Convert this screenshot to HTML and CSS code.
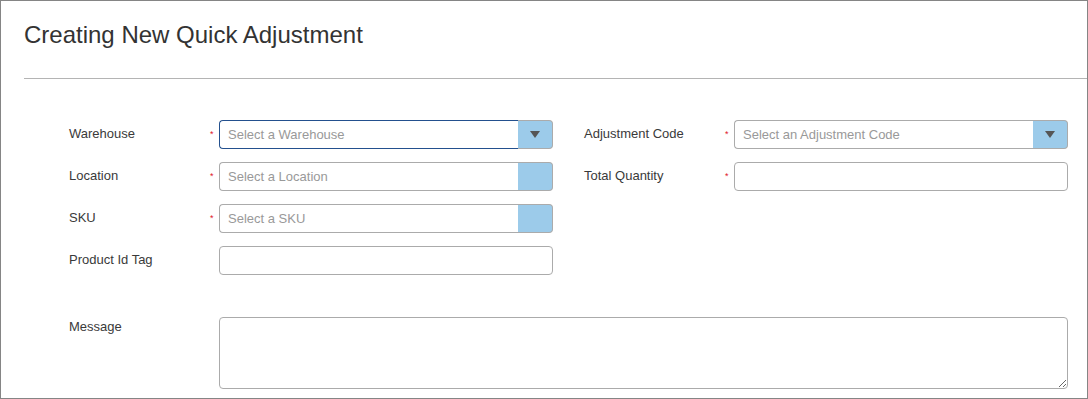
FILE: index.html
```html
<!DOCTYPE html>
<html lang="en">
<head>
    <meta charset="UTF-8">
    <title>Creating New Quick Adjustment</title>
    <link rel="stylesheet" href="styles.css">
</head>
<body>
    <div class="panel">
        <div class="panel-header">
            <h1>Creating New Quick Adjustment</h1>
        </div>
        <form class="adjust-form">
            <div class="columns">
                <div class="column">
                    <div class="field">
                        <label>Warehouse</label>
                        <span class="req">*</span>
                        <div class="select focused">
                            <input type="text" placeholder="Select a Warehouse">
                            <span class="select-btn"><span class="caret"></span></span>
                        </div>
                    </div>
                    <div class="field">
                        <label>Location</label>
                        <span class="req">*</span>
                        <div class="select">
                            <input type="text" placeholder="Select a Location">
                            <span class="select-btn"></span>
                        </div>
                    </div>
                    <div class="field">
                        <label>SKU</label>
                        <span class="req">*</span>
                        <div class="select">
                            <input type="text" placeholder="Select a SKU">
                            <span class="select-btn"></span>
                        </div>
                    </div>
                    <div class="field">
                        <label>Product Id Tag</label>
                        <span class="req"></span>
                        <input class="text-input" type="text">
                    </div>
                </div>
                <div class="column">
                    <div class="field">
                        <label>Adjustment Code</label>
                        <span class="req">*</span>
                        <div class="select">
                            <input type="text" placeholder="Select an Adjustment Code">
                            <span class="select-btn"><span class="caret"></span></span>
                        </div>
                    </div>
                    <div class="field">
                        <label>Total Quantity</label>
                        <span class="req">*</span>
                        <input class="text-input" type="text">
                    </div>
                </div>
            </div>
            <div class="field message-field">
                <label>Message</label>
                <span class="req"></span>
                <textarea></textarea>
            </div>
        </form>
    </div>
</body>
</html>
```

FILE: styles.css
```css
* {
    box-sizing: border-box;
}
body {
    margin: 0;
    font-family: 'Liberation Sans', Arial, sans-serif;
    color: #333;
    background-color: #fff;
}
.panel {
    width: 1088px;
    height: 399px;
    border: 1px solid #858585;
    overflow: hidden;
}
.panel-header {
    margin-left: 23px;
    height: 78px;
    border-bottom: 1px solid #b4b4b4;
}
h1 {
    margin: 0;
    padding-top: 20px;
    font-size: 24px;
    font-weight: normal;
    color: #333;
    line-height: 28px;
}
.adjust-form {
    padding: 41px 0 0 68px;
}
.columns {
    display: flex;
    gap: 31px;
}
.column {
    display: flex;
    flex-direction: column;
    gap: 13px;
    width: 484px;
}
.field {
    display: flex;
    align-items: flex-start;
    height: 29px;
}
.field label {
    width: 142px;
    font-size: 13px;
    line-height: 28px;
    color: #3a3a3a;
}
.req {
    width: 8px;
    margin-left: -1px;
    margin-right: 1px;
    color: #e0141e;
    font-size: 9px;
    line-height: 29px;
}
.select {
    display: flex;
    width: 334px;
    height: 29px;
}
.select input,
.text-input,
textarea {
    font-family: 'Liberation Sans', Arial, sans-serif;
    font-size: 13px;
    color: #333;
    border: 1px solid #ababab;
    outline: none;
    background-color: #fff;
}
.select input {
    flex: 1;
    min-width: 0;
    height: 29px;
    padding: 0 8px;
    border-right: none;
    border-radius: 4px 0 0 4px;
}
.select input::placeholder {
    color: #999;
}
.select.focused input {
    border-color: #23508e;
}
.select-btn {
    width: 35px;
    height: 29px;
    background-color: #9ccbea;
    border: 1px solid #ababab;
    border-left: none;
    border-radius: 0 4px 4px 0;
    display: flex;
    align-items: center;
    justify-content: center;
}
.caret {
    width: 0;
    height: 0;
    border-left: 5px solid transparent;
    border-right: 5px solid transparent;
    border-top: 7px solid #555;
}
.text-input {
    width: 334px;
    height: 29px;
    padding: 0 8px;
    border-radius: 4px;
}
.message-field {
    margin-top: 42px;
    height: 72px;
}
.message-field label {
    line-height: 20px;
}
textarea {
    width: 849px;
    height: 72px;
    border-radius: 4px;
    padding: 6px 8px;
    resize: vertical;
}
```
